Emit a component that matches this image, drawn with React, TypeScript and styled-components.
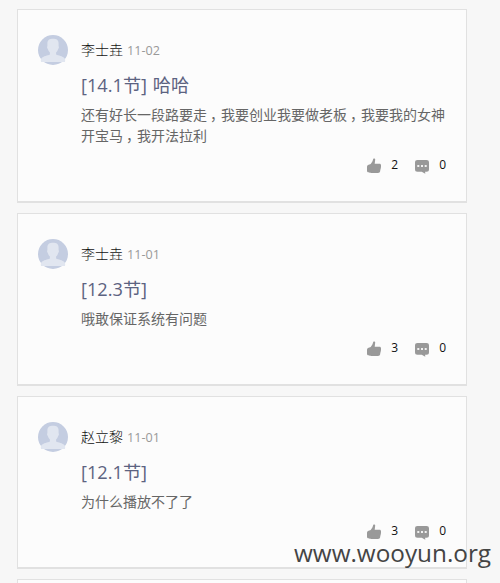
import React from "react";
import styled, { createGlobalStyle } from "styled-components";

const GlobalStyle = createGlobalStyle`
  * { box-sizing: border-box; }
  body {
    margin: 0;
    background: #f7f7f7;
    font-family: "Open Sans", "Noto Sans CJK SC", sans-serif;
    overflow: hidden;
  }
`;

const Page = styled.main`
  position: relative;
  height: 583px;
  overflow: hidden;
  padding: 9px 33px 0 17px;
  display: flex;
  flex-direction: column;
  gap: 10px;
`;

const Card = styled.article`
  display: flex;
  flex: none;
  gap: 13px;
  padding: 25px 20px 26px;
  background: #fcfcfc;
  border: 1px solid #e1e1e1;
  border-bottom-width: 2px;
`;

const AvatarIcon = styled.svg`
  flex: none;
  width: 30px;
  height: 30px;
`;

const Content = styled.div`
  flex: 1;
  min-width: 0;
`;

const Byline = styled.header`
  display: flex;
  align-items: center;
  gap: 4px;
  height: 30px;
`;

const Author = styled.span`
  font-size: 14px;
  line-height: 30px;
  font-weight: 300;
  color: #111;
`;

const PostDate = styled.time`
  font-size: 12.6px;
  line-height: 30px;
  padding-top: 1px;
  color: #999;
`;

const Title = styled.h2`
  margin: 5px 0 0;
  height: 34px;
  font-size: 18.2px;
  line-height: 30px;
  font-weight: 400;
  word-spacing: 1px;
  color: #5c6381;
  white-space: nowrap;
`;

const Message = styled.p`
  margin: 0;
  width: 366px;
  font-size: 14px;
  line-height: 21px;
  color: #666;
`;

const Comma = styled.span`
  padding-left: 3px;
  margin-right: -3px;
`;

const Actions = styled.footer`
  display: flex;
  justify-content: flex-end;
  gap: 17px;
  margin-top: 9px;
  height: 20px;
`;

const Action = styled.div`
  display: flex;
  align-items: center;
  gap: 10px;
  font-size: 12px;
  line-height: 20px;
  color: #111;
`;

const ActionIcon = styled.svg`
  width: 14px;
  height: 16px;
  margin-top: 2px;
`;

const Watermark = styled.div`
  position: absolute;
  left: 294px;
  top: 536px;
  font-size: 24.3px;
  line-height: 34px;
  color: #444;
  white-space: nowrap;
`;

const Avatar = () => (
  <AvatarIcon viewBox="0 0 30 30">
    <circle cx="15" cy="15" r="15" fill="#c4cde1" />
    <path
      d="M15 3.800c3.600 0 5.600 1.200 5.600 4.600v2.400c0 .6.400.8.300 1.700-.1 1-.6 1-.8 1.700-.4 1.400-1 2.500-2 3.300v2.100c2.200 1.300 6.400 1.300 8.600 3.900.5.600.6 1.600.3 3.500h-24c-.3-1.900-.2-2.900.3-3.500 2.200-2.600 6.400-2.600 8.600-3.900v-2.100c-1-.8-1.600-1.900-2-3.300-.2-.7-.7-.7-.8-1.700-.1-.9.300-1.100.300-1.700V8.400c0-3.400 2-4.600 5.600-4.600Z"
      fill="#e1e6f0"
    />
  </AvatarIcon>
);

const Thumb = () => (
  <ActionIcon viewBox="0 0 14 16" fill="#999">
    <path d="M6.200 1C6.800.2 8.200.4 8.200 1.600L7.700 5.700H12.400c1.100 0 1.600.6 1.600 1.500v2.200l-.4.700.2.700-.5 1-.1 1.300c-.2 1.300-.9 1.900-2.200 1.900H4.200C3 15 2.500 14.500 1.500 14.300.4 14.100 0 13.700 0 12.700V8.800c0-.8.3-1.300 1-1.700L3.700 5.900 5.500 3.300Z" />
  </ActionIcon>
);

const Bubble = () => (
  <ActionIcon viewBox="0 0 14 16">
    <path
      d="M2.500 2h9C13.200 2 14 2.800 14 4.500v6.700c0 1.700-.8 2.500-2.500 2.500h-1.400l.2 2L6.700 13.700H2.500C.8 13.700 0 12.900 0 11.200V4.500C0 2.800.8 2 2.500 2Z"
      fill="#999"
    />
    <path d="M2.300 7h2v2h-2zM6 7h2v2H6zM9.700 7h2v2h-2z" fill="#f1f1f1" />
  </ActionIcon>
);

interface Post {
  author: string;
  date: string;
  title: string;
  message: string;
  likes: number;
  replies: number;
}

const posts: Post[] = [
  {
    author: "李士垚",
    date: "11-02",
    title: "[14.1节] 哈哈",
    message: "还有好长一段路要走，我要创业我要做老板，我要我的女神开宝马，我开法拉利",
    likes: 2,
    replies: 0,
  },
  { author: "李士垚", date: "11-01", title: "[12.3节]", message: "哦敢保证系统有问题", likes: 3, replies: 0 },
  { author: "赵立黎", date: "11-01", title: "[12.1节]", message: "为什么播放不了了", likes: 3, replies: 0 },
];

const PostCard = ({ post }: { post: Post }) => (
  <Card>
    <Avatar />
    <Content>
      <Byline>
        <Author>{post.author}</Author>
        <PostDate>{post.date}</PostDate>
      </Byline>
      <Title>{post.title}</Title>
      <Message>
        {post.message.split("，").map((clause, i) => (
          <React.Fragment key={i}>
            {i > 0 && <Comma>，</Comma>}
            {clause}
          </React.Fragment>
        ))}
      </Message>
      <Actions>
        <Action>
          <Thumb />
          {post.likes}
        </Action>
        <Action>
          <Bubble />
          {post.replies}
        </Action>
      </Actions>
    </Content>
  </Card>
);

export default function App() {
  return (
    <>
      <GlobalStyle />
      <Page>
        {posts.map((post) => (
          <PostCard key={post.title} post={post} />
        ))}
        <Card />
        <Watermark>www.wooyun.org</Watermark>
      </Page>
    </>
  );
}
